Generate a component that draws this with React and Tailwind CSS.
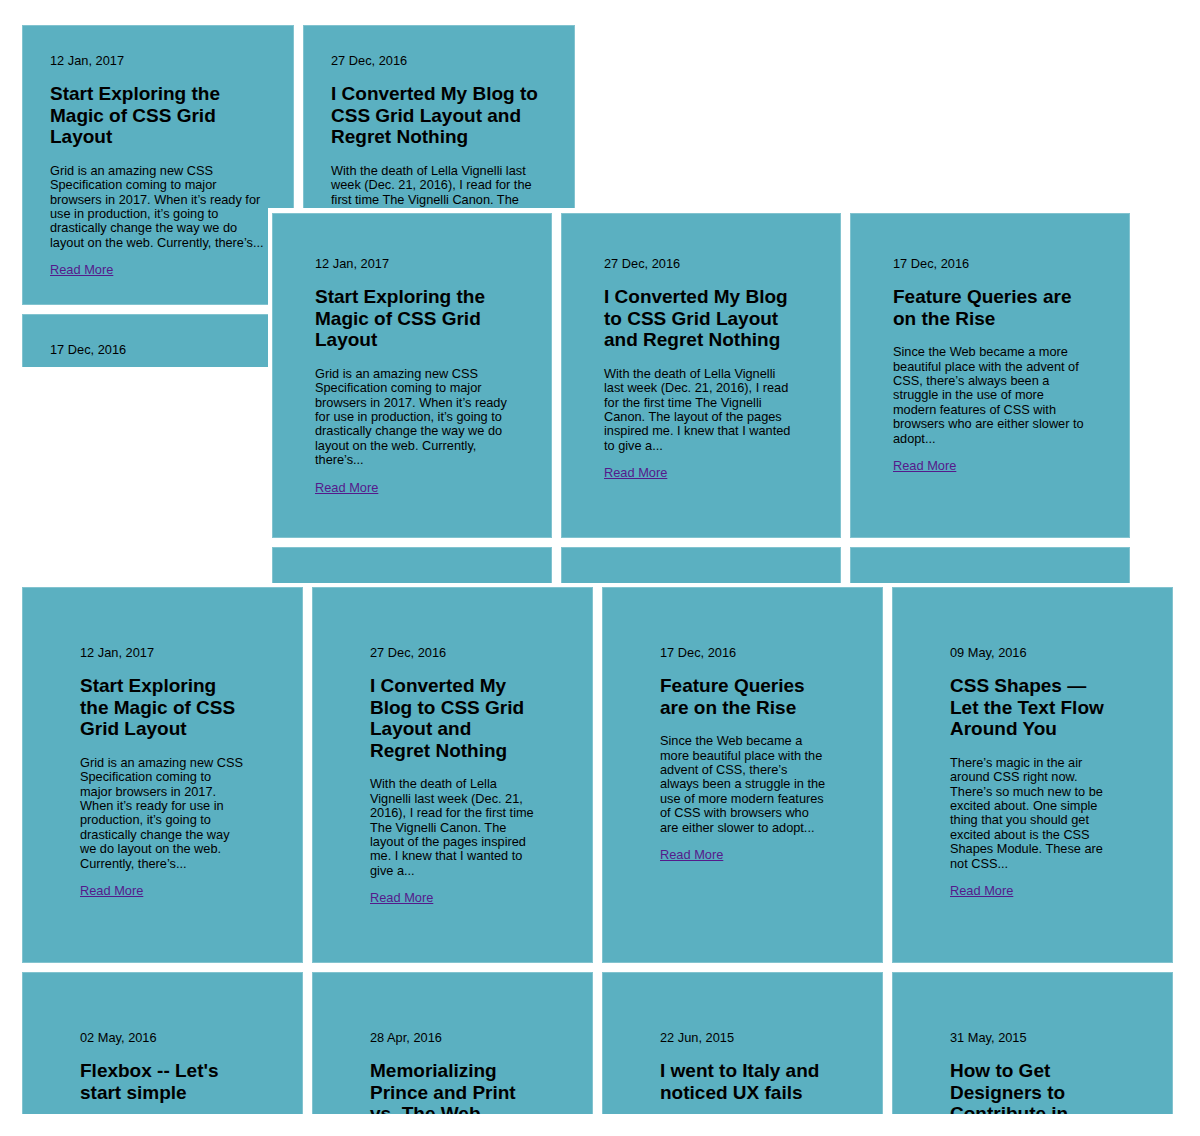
import React from "react";

const grid1 = [
  {
    date: "12 Jan, 2017",
    title: ["Start Exploring the", "Magic of CSS Grid", "Layout"],
    body: [
      "Grid is an amazing new CSS",
      "Specification coming to major",
      "browsers in 2017. When it’s ready for",
      "use in production, it’s going to",
      "drastically change the way we do",
      "layout on the web. Currently, there’s...",
    ],
  },
  {
    date: "27 Dec, 2016",
    title: ["I Converted My Blog to", "CSS Grid Layout and", "Regret Nothing"],
    body: [
      "With the death of Lella Vignelli last",
      "week (Dec. 21, 2016), I read for the",
      "first time The Vignelli Canon. The",
      "layout of the pages inspired me. I knew",
      "that I wanted to give a...",
    ],
  },
  {
    date: "17 Dec, 2016",
    title: ["Feature Queries are on the", "Rise"],
    body: [
      "Since the Web became a more beautiful",
      "place with the advent of CSS, there’s",
      "always been a struggle in the use of",
      "more modern features of CSS with",
      "browsers who are either slower to",
      "adopt...",
    ],
  },
  {
    date: "09 May, 2016",
    title: ["CSS Shapes — Let the Text", "Flow Around You"],
    body: [
      "There’s magic in the air around CSS",
      "right now. There’s so much new to be",
      "excited about. One simple thing that",
      "you should get excited about is the CSS",
      "Shapes Module. These are not CSS...",
    ],
  },
];

const grid2 = [
  {
    date: "12 Jan, 2017",
    title: ["Start Exploring the", "Magic of CSS Grid", "Layout"],
    body: [
      "Grid is an amazing new CSS",
      "Specification coming to major",
      "browsers in 2017. When it’s ready",
      "for use in production, it’s going to",
      "drastically change the way we do",
      "layout on the web. Currently,",
      "there’s...",
    ],
  },
  {
    date: "27 Dec, 2016",
    title: ["I Converted My Blog", "to CSS Grid Layout", "and Regret Nothing"],
    body: [
      "With the death of Lella Vignelli",
      "last week (Dec. 21, 2016), I read",
      "for the first time The Vignelli",
      "Canon. The layout of the pages",
      "inspired me. I knew that I wanted",
      "to give a...",
    ],
  },
  {
    date: "17 Dec, 2016",
    title: ["Feature Queries are", "on the Rise"],
    body: [
      "Since the Web became a more",
      "beautiful place with the advent of",
      "CSS, there’s always been a",
      "struggle in the use of more",
      "modern features of CSS with",
      "browsers who are either slower to",
      "adopt...",
    ],
  },
  {
    date: "09 May, 2016",
    title: ["CSS Shapes — Let the", "Text Flow Around You"],
    body: [
      "There’s magic in the air around",
      "CSS right now. There’s so much new",
      "to be excited about.",
    ],
  },
  {
    date: "02 May, 2016",
    title: ["Flexbox -- Let's start", "simple"],
    body: ["Flexbox is a layout module", "that makes it easier..."],
  },
  {
    date: "28 Apr, 2016",
    title: ["Memorializing Prince and", "Print vs. The Web"],
    body: ["The passing of Prince..."],
  },
];

const grid3 = [
  {
    date: "12 Jan, 2017",
    title: ["Start Exploring", "the Magic of CSS", "Grid Layout"],
    body: [
      "Grid is an amazing new CSS",
      "Specification coming to",
      "major browsers in 2017.",
      "When it’s ready for use in",
      "production, it’s going to",
      "drastically change the way",
      "we do layout on the web.",
      "Currently, there’s...",
    ],
  },
  {
    date: "27 Dec, 2016",
    title: ["I Converted My", "Blog to CSS Grid", "Layout and", "Regret Nothing"],
    body: [
      "With the death of Lella",
      "Vignelli last week (Dec. 21,",
      "2016), I read for the first time",
      "The Vignelli Canon. The",
      "layout of the pages inspired",
      "me. I knew that I wanted to",
      "give a...",
    ],
  },
  {
    date: "17 Dec, 2016",
    title: ["Feature Queries", "are on the Rise"],
    body: [
      "Since the Web became a",
      "more beautiful place with the",
      "advent of CSS, there’s",
      "always been a struggle in the",
      "use of more modern features",
      "of CSS with browsers who",
      "are either slower to adopt...",
    ],
  },
  {
    date: "09 May, 2016",
    title: ["CSS Shapes —", "Let the Text Flow", "Around You"],
    body: [
      "There’s magic in the air",
      "around CSS right now.",
      "There’s so much new to be",
      "excited about. One simple",
      "thing that you should get",
      "excited about is the CSS",
      "Shapes Module. These are",
      "not CSS...",
    ],
  },
  {
    date: "02 May, 2016",
    title: ["Flexbox -- Let's", "start simple"],
    body: ["Flexbox is a layout module", "that makes it easier to", "design flexible layouts..."],
  },
  {
    date: "28 Apr, 2016",
    title: ["Memorializing", "Prince and Print", "vs. The Web"],
    body: ["The passing of Prince", "made me think about the", "web and print..."],
  },
  {
    date: "22 Jun, 2015",
    title: ["I went to Italy and", "noticed UX fails"],
    body: ["A trip to Italy taught me", "a lot about design..."],
  },
  {
    date: "31 May, 2015",
    title: ["How to Get", "Designers to", "Contribute in", "Open Source"],
    body: ["Open source needs", "designers too..."],
  },
];

function Card({ post, pad }) {
  return (
    <div className={`bg-[#5bb0c1] border border-[#82c3cf] text-black ${pad}`}>
      <p className="text-[12.8px] leading-[15px] mb-[15px] whitespace-nowrap">{post.date}</p>
      <h2 className="text-[19px] leading-[21.6px] font-bold mb-[16px]">
        {post.title.map((l, i) => (
          <span key={i} className="block whitespace-nowrap">
            {l}
          </span>
        ))}
      </h2>
      <p className="text-[12.75px] leading-[14.4px] mb-[13px]">
        {post.body.map((l, i) => (
          <span key={i} className="block whitespace-nowrap">
            {l}
          </span>
        ))}
      </p>
      <a href="#" className="block w-fit text-[12.8px] leading-[14px] text-[#551a8b] underline">
        Read More
      </a>
    </div>
  );
}

export default function App() {
  return (
    <div
      className="w-[1200px] h-[1136px] bg-white overflow-hidden"
      style={{ fontFamily: '"Liberation Sans", Arial, Helvetica, sans-serif' }}
    >
      <div className="pt-[25px]">
        <div className="ml-[22px] w-[553px] h-[342px] overflow-hidden">
          <div className="grid grid-cols-[repeat(2,272px)] gap-[9px]">
            {grid1.map((p, i) => (
              <Card key={i} post={p} pad="p-[27px]" />
            ))}
          </div>
        </div>

        <div className="relative z-10 mt-[-159px] ml-[268px] w-[870px] h-[375px] overflow-hidden bg-white pt-[5px] pl-[4px]">
          <div className="grid grid-cols-[repeat(3,280px)] gap-[9px]">
            {grid2.map((p, i) => (
              <Card key={i} post={p} pad="p-[42px]" />
            ))}
          </div>
        </div>

        <div className="mt-[4px] ml-[22px] w-[1151px] h-[527px] overflow-hidden">
          <div className="grid grid-cols-[repeat(4,281px)] gap-[9px]">
            {grid3.map((p, i) => (
              <Card key={i} post={p} pad="p-[57px]" />
            ))}
          </div>
        </div>
      </div>
    </div>
  );
}
